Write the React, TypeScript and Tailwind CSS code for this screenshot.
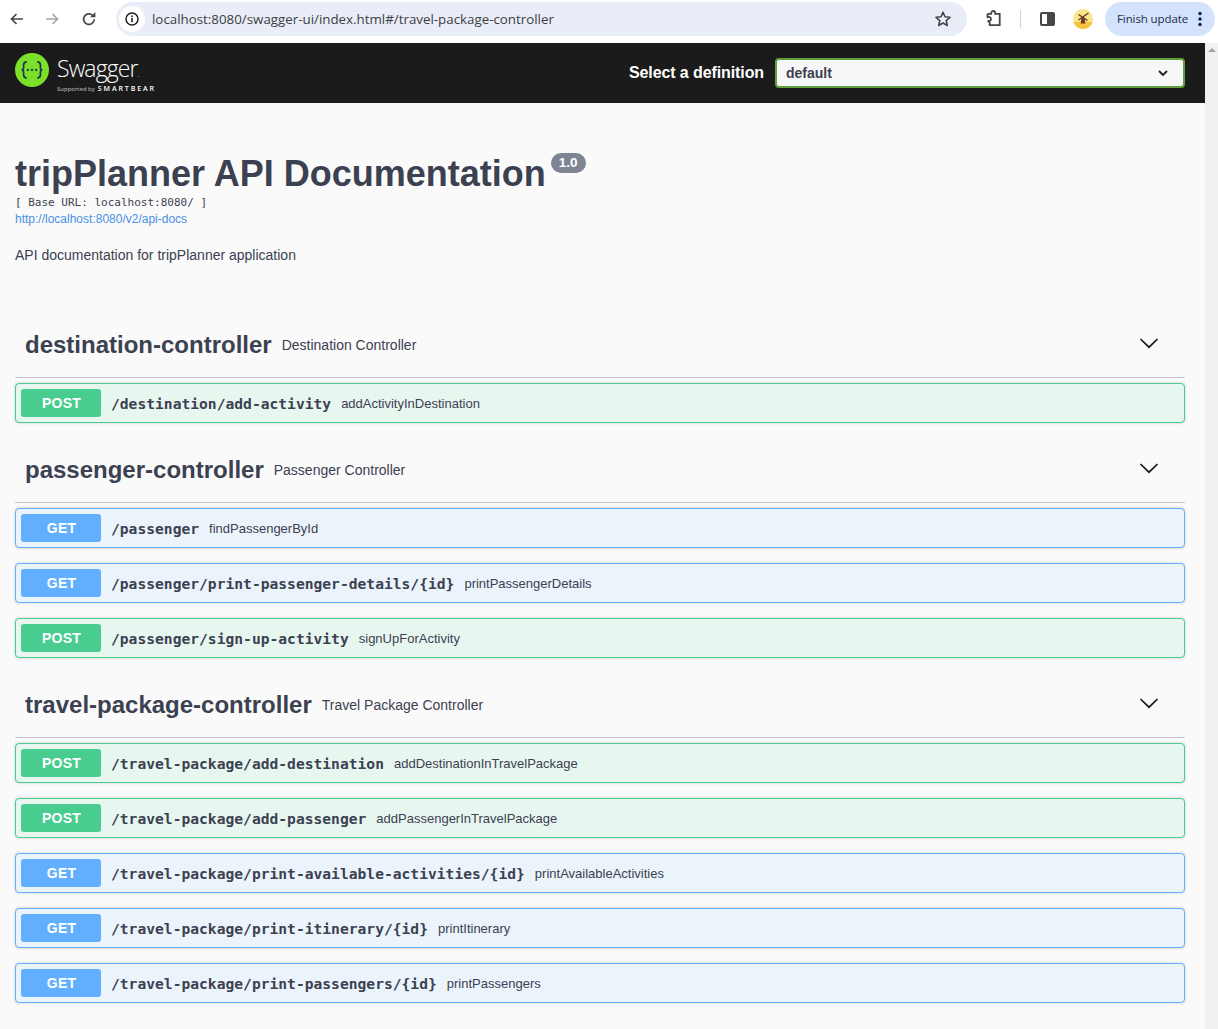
import React from "react";

const sans = "font-['Liberation_Sans',Arial,sans-serif]";

function Chevron() {
  return (
    <svg width="20" height="20" viewBox="0 0 20 20" className="block">
      <path d="M1.5 6 L10 14.2 L18.5 6" fill="none" stroke="#1a1a1a" strokeWidth="1.7" />
    </svg>
  );
}

type Op = { m: "GET" | "POST"; path: string; desc: string };

function Row({ m, path, desc }: Op) {
  const post = m === "POST";
  return (
    <div
      className={`flex h-10 items-center rounded-[4px] border pl-[5px] shadow-[0_0_3px_rgba(0,0,0,0.19)] ${
        post ? "border-[#49cc90] bg-[#e8f6f0]" : "border-[#61affe] bg-[#ebf3fb]"
      }`}
    >
      <span
        className={`flex h-7 w-20 shrink-0 items-center justify-center rounded-[3px] pl-[1px] text-sm font-bold tracking-[0.2px] text-white ${
          post ? "bg-[#49cc90]" : "bg-[#61affe]"
        }`}
      >
        {m}
      </span>
      <span className="ml-[10px] pt-[1px] font-['DejaVu_Sans_Mono',monospace] text-[14.64px] font-bold text-[#3b4151]">
        {path}
      </span>
      <span className="ml-[10px] text-[13px] leading-none text-[#3b4151]">{desc}</span>
    </div>
  );
}

function Section({ name, desc, ops }: { name: string; desc: string; ops: Op[] }) {
  return (
    <section className="mb-[13px]">
      <div className="mb-[5px] flex h-[67px] items-center border-b border-[#c5c6c8] pl-[10px] pr-[26px]">
        <h3 className="pt-[2px] text-2xl font-bold text-[#3b4151]">{name}</h3>
        <span className="ml-[10px] pt-[1px] text-sm text-[#3b4151]">{desc}</span>
        <span className="ml-auto -translate-y-[1px]">
          <Chevron />
        </span>
      </div>
      <div className="flex flex-col gap-[15px]">
        {ops.map((o) => (
          <Row key={o.path} {...o} />
        ))}
      </div>
    </section>
  );
}

function Logo() {
  return (
    <svg width="34" height="34" viewBox="0 0 36 36" className="block">
      <circle cx="18" cy="18" r="18" fill="#7ce02b" />
      <path
        d="M12.5 9.5c-3 0-3.400 1.500-3.400 3.400v3c0 1.400-.8 2.100-2.200 2.100 1.400 0 2.200.7 2.200 2.100v3c0 1.900.4 3.400 3.400 3.400M23.500 9.500c3 0 3.400 1.500 3.400 3.400v3c0 1.400.8 2.100 2.200 2.100-1.400 0-2.200.7-2.200 2.100v3c0 1.900-.4 3.400-3.400 3.400"
        fill="none"
        stroke="#173647"
        strokeWidth="1.8"
      />
      <circle cx="13.6" cy="18" r="1.200" fill="#173647" />
      <circle cx="18" cy="18" r="1.200" fill="#173647" />
      <circle cx="22.4" cy="18" r="1.200" fill="#173647" />
    </svg>
  );
}

function Toolbar() {
  return (
    <div className="flex h-[43px] items-start bg-white pt-[2px]">
      <div className="flex h-[34px] w-[116px] shrink-0 items-center pl-[9px]">
        <svg width="16" height="16" viewBox="0 0 16 16">
          <path d="M14 8H3M7.500 3 2.500 8l5 5" fill="none" stroke="#444746" strokeWidth="1.700" />
        </svg>
        <svg width="16" height="16" viewBox="0 0 16 16" className="ml-[19px]">
          <path d="M2 8h11M8.500 3l5 5-5 5" fill="none" stroke="#a4a6a8" strokeWidth="1.700" />
        </svg>
        <svg width="16" height="16" viewBox="0 0 16 16" className="ml-[21px]">
          <path d="M13.200 8.200A5.300 5.300 0 1 1 11.600 4.300" fill="none" stroke="#444746" strokeWidth="1.700" />
          <path d="M9.200 6.200h5.200V1z" fill="#444746" />
        </svg>
      </div>
      <div className="flex h-[34px] w-[851px] shrink-0 items-center rounded-full bg-[#e9edf7] pl-[3px] pr-[15px]">
        <span className="flex h-[26px] w-[26px] items-center justify-center rounded-full bg-white">
          <svg width="14" height="14" viewBox="0 0 14 14">
            <circle cx="7" cy="7" r="6" fill="none" stroke="#1f1f1f" strokeWidth="1.500" />
            <path d="M7 6v4.200M7 3.400v1.500" stroke="#1f1f1f" strokeWidth="1.600" />
          </svg>
        </span>
        <span className="ml-[7px] pt-[1px] font-['Open_Sans',sans-serif] text-[13.33px] text-[#3c4043]">
          localhost:8080/swagger-ui/index.html#/travel-package-controller
        </span>
        <svg width="18" height="18" viewBox="0 0 18 18" className="ml-auto">
          <path
            d="M9 2.200l2 4.600 5 .5-3.800 3.300 1.100 4.900L9 13l-4.300 2.500 1.100-4.900L2 7.300l5-.5z"
            fill="none"
            stroke="#444746"
            strokeWidth="1.600"
            strokeLinejoin="round"
          />
        </svg>
      </div>
      <div className="flex h-[34px] flex-1 items-center">
        <svg width="18" height="18" viewBox="0 0 18 18" className="ml-[18px]">
          <path
            d="M2.500 3.800h3.700V3a2 2 0 0 1 4 0v.8h4.500v4.100M14.700 7.900v7.300H4M2.500 3.800v3.400c2.300-.6 3.500.3 3.500 1.800s-1.200 2.400-3.500 1.800M4 15.200c1.300-1.200 1.300-3.200-1.500-4.400"
            fill="none"
            stroke="#444746"
            strokeWidth="1.800"
          />
        </svg>
        <span className="ml-[17px] h-[18px] w-px bg-[#c7d3e8]" />
        <span className="ml-[19px] flex h-[14px] w-[15px] justify-end rounded-[2px] border-2 border-[#444746]">
          <span className="w-[6px] bg-[#444746]" />
        </span>
        <svg width="20" height="20" viewBox="0 0 20 20" className="ml-[18px]">
          <circle cx="10" cy="10" r="10" fill="#f9e68a" />
          <path d="M.5 13h19a10 10 0 0 1-19 0z" fill="#f5c33b" />
          <path d="M7.600 14.500l1-6h2.800l1 6z" fill="#6b3a1e" />
          <path d="M5.500 5.500l9 6M15.500 4 5.500 11" stroke="#6b3a1e" strokeWidth="1.400" />
        </svg>
        <span className="ml-[12px] flex h-[34px] w-[110px] items-center rounded-full bg-[#d3e3fd] pl-[12px] font-['Open_Sans',sans-serif] text-[11.5px] tracking-[-0.1px] text-[#1f2a44]">
          Finish update
          <svg width="4" height="16" viewBox="0 0 4 16" className="ml-[10px]">
            <circle cx="2" cy="2.500" r="1.700" fill="#0b1f4b" />
            <circle cx="2" cy="8" r="1.700" fill="#0b1f4b" />
            <circle cx="2" cy="13.500" r="1.700" fill="#0b1f4b" />
          </svg>
        </span>
      </div>
    </div>
  );
}

const sections: { name: string; desc: string; ops: Op[] }[] = [
  {
    name: "destination-controller",
    desc: "Destination Controller",
    ops: [{ m: "POST", path: "/destination/add-activity", desc: "addActivityInDestination" }],
  },
  {
    name: "passenger-controller",
    desc: "Passenger Controller",
    ops: [
      { m: "GET", path: "/passenger", desc: "findPassengerById" },
      { m: "GET", path: "/passenger/print-passenger-details/{id}", desc: "printPassengerDetails" },
      { m: "POST", path: "/passenger/sign-up-activity", desc: "signUpForActivity" },
    ],
  },
  {
    name: "travel-package-controller",
    desc: "Travel Package Controller",
    ops: [
      { m: "POST", path: "/travel-package/add-destination", desc: "addDestinationInTravelPackage" },
      { m: "POST", path: "/travel-package/add-passenger", desc: "addPassengerInTravelPackage" },
      { m: "GET", path: "/travel-package/print-available-activities/{id}", desc: "printAvailableActivities" },
      { m: "GET", path: "/travel-package/print-itinerary/{id}", desc: "printItinerary" },
      { m: "GET", path: "/travel-package/print-passengers/{id}", desc: "printPassengers" },
    ],
  },
];

export default function App() {
  return (
    <div className={`h-[1029px] overflow-hidden bg-[#fafafa] ${sans}`}>
      <Toolbar />
      <div className="flex h-[986px]">
        <main className="min-w-0 flex-1">
          <header className="flex h-[60px] items-center bg-[#1b1b1b] pl-[15px] pr-5">
            <span className="-mt-[6px]">
              <Logo />
            </span>
            <div className="ml-[8px] mt-[2px] flex flex-col text-white">
              <span className="font-['Open_Sans',sans-serif] text-[23px] font-light leading-[24px] tracking-[-0.9px]">
                Swagger<span className="text-[8px]">.</span>
              </span>
              <span className="-mt-[1px] flex items-center leading-none">
                <span className="font-['Open_Sans',sans-serif] text-[6px] text-[#c8c8c8]">Supported by</span>
                <span className="ml-[3px] font-['Open_Sans',sans-serif] text-[7px] font-semibold tracking-[1.9px]">
                  SMARTBEAR
                </span>
              </span>
            </div>
            <label className="ml-auto text-base font-bold tracking-[-0.1px] text-white">Select a definition</label>
            <div className="ml-[11px] flex h-[30px] w-[410px] items-center justify-between rounded-[4px] border-2 border-[#62a03f] bg-[#f7f7f7] pl-[9px] pr-[15px] text-sm font-bold text-[#3b4151]">
              default
              <svg width="10" height="7" viewBox="0 0 10 7">
                <path d="M1 1l4 4 4-4" fill="none" stroke="#1f1f1f" strokeWidth="1.800" />
              </svg>
            </div>
          </header>
          <div className="pl-[15px] pr-[20px]">
            <div className="flex items-start pt-[51px]">
              <h1 className="text-[36px] font-bold leading-[40px] text-[#3b4151]">tripPlanner API Documentation</h1>
              <span className="ml-[5px] -mt-[1px] rounded-[57px] bg-[#7d8492] px-[8px] py-[2px] text-[13.5px] font-bold leading-4 text-white">
                1.0
              </span>
            </div>
            <div className="mt-[1px] font-['DejaVu_Sans_Mono',monospace] text-[11px] leading-4 text-[#3b4151]">
              [ Base URL: localhost:8080/ ]
            </div>
            <a className="block text-xs leading-4 text-[#4990e2]">http://localhost:8080/v2/api-docs</a>
            <p className="mt-[19px] text-sm leading-[18px] text-[#3b4151]">API documentation for tripPlanner application</p>
            <div className="mt-[47px]">
              {sections.map((s) => (
                <Section key={s.name} {...s} />
              ))}
            </div>
          </div>
        </main>
        <aside className="flex w-[13px] shrink-0 justify-center bg-[#f1f1f1] pt-[5px]">
          <span className="h-0 w-0 border-x-[4px] border-b-[4px] border-x-transparent border-b-[#a3a3a3]" />
        </aside>
      </div>
    </div>
  );
}
